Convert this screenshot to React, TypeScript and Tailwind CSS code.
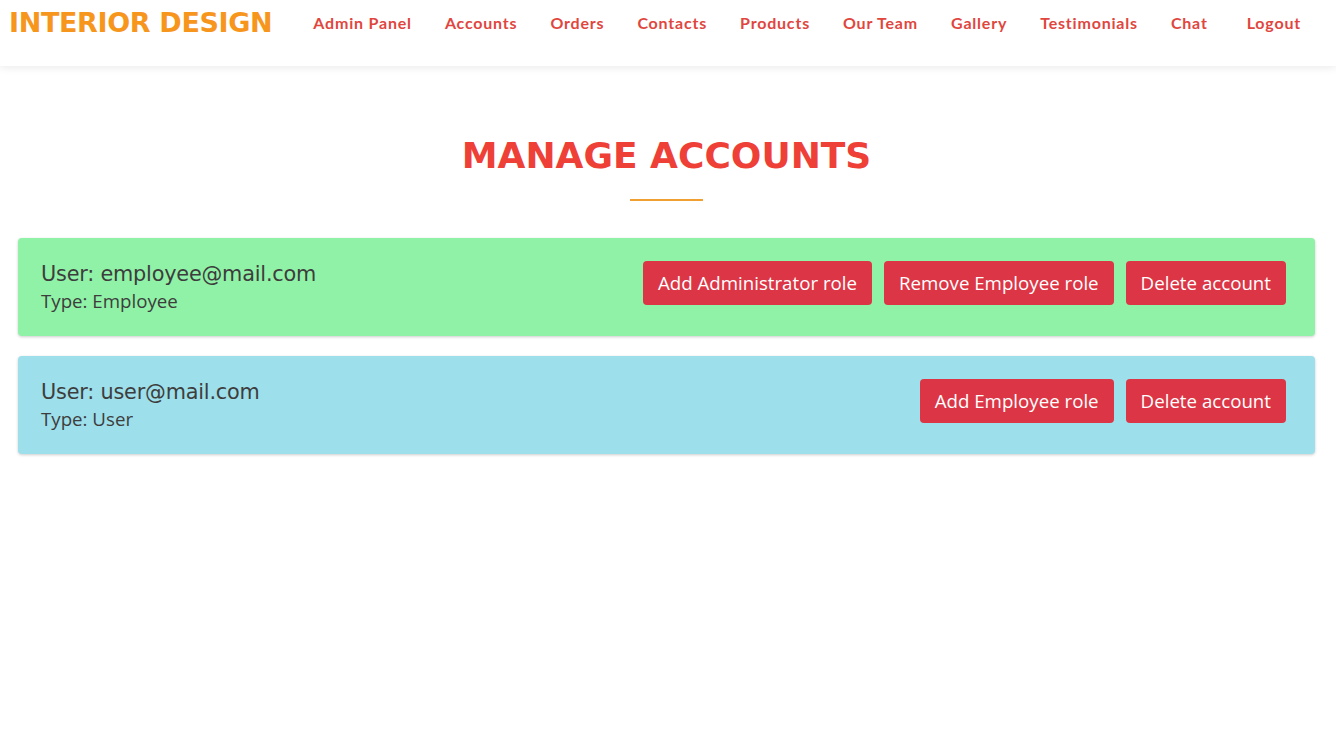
import React from "react";

const navItems = ["Admin Panel", "Accounts", "Orders", "Contacts", "Products", "Our Team", "Gallery", "Testimonials", "Chat"];

function Card({ bg, email, type, buttons }: { bg: string; email: string; type: string; buttons: string[] }) {
  return (
    <div className={`${bg} rounded-[4px] shadow-[0_1px_3px_rgba(0,0,0,0.2)] flex items-start justify-between pl-[23px] pr-[29px] pt-[23px] h-[98px]`}>
      <div className="flex flex-col text-[#3d3d3d]">
        <div className="text-[20.8px] leading-[26px] font-['DejaVu_Sans',sans-serif] tracking-[-0.2px]">User: {email}</div>
        <div className="text-[18.7px] leading-[27px] font-['Open_Sans',sans-serif]">Type: {type}</div>
      </div>
      <div className="flex gap-[12px]">
        {buttons.map((b) => (
          <button key={b} className="bg-[#dc3545] text-white rounded-[4px] h-[44px] px-[15px] text-[18.7px] font-['Open_Sans',sans-serif]">
            {b}
          </button>
        ))}
      </div>
    </div>
  );
}

export default function App() {
  return (
    <div className="min-h-[740px] bg-white">
      <header className="h-[66px] bg-white shadow-[0_2px_8px_rgba(0,0,0,0.08)] flex items-start pt-[9px]">
        <div className="pl-[9px] text-[27px] font-bold text-[#f7961d] font-['DejaVu_Sans',sans-serif] leading-[28px] tracking-[-0.35px]">INTERIOR DESIGN</div>
        <nav className="flex ml-[41px] gap-[33px] font-['Lato',sans-serif] font-bold text-[16px] text-[#e0463e] leading-[28px] tracking-[0.8px]">
          {navItems.map((n) => (
            <span key={n}>{n}</span>
          ))}
          <span className="ml-[6px]">Logout</span>
        </nav>
      </header>
      <main className="pl-[18px] pr-[21px]">
        <div className="flex flex-col items-center pt-[67px]">
          <h1 className="text-[36px] font-bold text-[#ee4037] font-['DejaVu_Sans',sans-serif] leading-[46px]">MANAGE ACCOUNTS</h1>
          <div className="w-[73px] h-[2px] bg-[#f0a030] mt-[20px]"></div>
        </div>
        <div className="flex flex-col gap-[20px] mt-[37px]">
          <Card bg="bg-[#90f2a6]" email="employee@mail.com" type="Employee" buttons={["Add Administrator role", "Remove Employee role", "Delete account"]} />
          <Card bg="bg-[#9ddfea]" email="user@mail.com" type="User" buttons={["Add Employee role", "Delete account"]} />
        </div>
      </main>
    </div>
  );
}
